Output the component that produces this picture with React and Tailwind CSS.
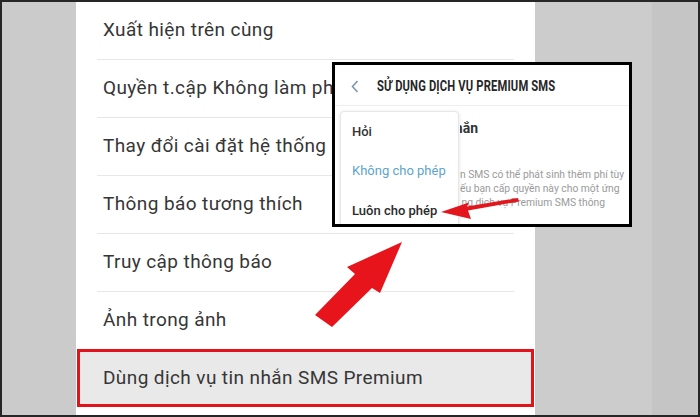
import React from "react";

const items = [
  "Xuất hiện trên cùng",
  "Quyền t.cập Không làm phiền",
  "Thay đổi cài đặt hệ thống",
  "Thông báo tương thích",
  "Truy cập thông báo",
  "Ảnh trong ảnh",
];

const SettingsList = () => (
  <div className="w-[459px] bg-white flex flex-col">
    {items.map((label, i) => (
      <div
        key={label}
        className={`${i === items.length - 1 ? "h-[57px]" : "h-[58px] border-b border-[#e7e7e7]"} mx-[21px] flex items-center pl-[6px] text-[19px] tracking-[0.4px] text-[#363636] whitespace-nowrap`}
      >
        {label}
      </div>
    ))}
    <div className="h-[58px] mx-px border-[3px] border-[#e3121b] bg-[#e9e9e9] flex items-center pl-[23px] text-[19px] tracking-[0.4px] text-[#363636]">
      Dùng dịch vụ tin nhắn SMS Premium
    </div>
  </div>
);

const PremiumInset = () => (
  <div className="absolute left-[330px] top-[60px] w-[300px] h-[165px] border-[3px] border-black bg-white overflow-hidden">
    <div className="h-[41px] flex items-center pt-[3px] pl-[16px] border-b border-[#eeeeee]">
      <svg width="8" height="13" viewBox="0 0 8 13">
        <polyline points="6.5,1 1.5,6.5 6.5,12" fill="none" stroke="#7d98ab" strokeWidth="1.6" />
      </svg>
      <span className="ml-[18px] text-[14px] font-bold text-[#262626] whitespace-nowrap scale-x-[0.8] origin-left inline-block tracking-[0.2px]">
        SỬ DỤNG DỊCH VỤ PREMIUM SMS
      </span>
    </div>

    {/* page text behind the dropdown: only the part right of the menu shows */}
    <div className="flex">
      <div className="w-[125px] shrink-0" />
      <div className="flex-1 overflow-hidden flex flex-col">
        <div className="mt-[12px] pr-[151px] flex justify-end text-[14px] font-bold text-[#333] leading-[20px]">
          <span className="whitespace-nowrap shrink-0">nhắn</span>
        </div>
        <div className="mt-[30px] flex flex-col text-[10.3px] leading-[14px] text-[#9a9a9a] whitespace-nowrap">
          <div className="text-right pr-[11px]">n SMS có thể phát sinh thêm phí tùy</div>
          <div className="text-right pr-[16px]">ếu bạn cấp quyền này cho một ứng</div>
          <div className="text-right pr-[24px]">ng dịch vụ Premium SMS thông</div>
        </div>
      </div>
    </div>

    <div className="absolute left-[5px] top-[46px] w-[119px] h-[140px] bg-white rounded-[4px] border border-[#e6e6e6] shadow-[0_1px_4px_rgba(0,0,0,0.12)] flex flex-col text-[13px]">
      <div className="h-[39px] flex items-center pl-[11px] font-medium text-[#333]">Hỏi</div>
      <div className="h-[40px] flex items-center pl-[11px] text-[#5ea5c9]">Không cho phép</div>
      <div className="h-[39px] flex items-center pl-[11px] font-medium text-[#2b2b2b]">Luôn cho phép</div>
    </div>
  </div>
);

const Arrows = () => (
  <svg
    className="absolute left-0 top-0 pointer-events-none"
    width="696"
    height="413"
    viewBox="2 2 696 413"
  >
    <polygon
      points="402,242 347,267 355,274 315,315 332,327 372,288 380,293"
      fill="#e8141c"
    />
    <polygon
      points="441,212 469,202.5 467,206.5 518,198 519,201.5 468,210.5 471,219"
      fill="#e3161d"
    />
  </svg>
);

export default function App() {
  return (
    <div className="w-[700px] h-[417px] relative overflow-hidden border-2 border-[#262626] bg-[#cbcbcb] flex font-['Roboto',sans-serif]">
      <div className="w-[74px] bg-[#cbcbcb]" />
      <SettingsList />
      <div className="flex-1 flex">
        <div className="flex-1 bg-[#cccccc]" />
        <div className="w-[46px] bg-[#c5c5c5]" />
      </div>
      <PremiumInset />
      <Arrows />
    </div>
  );
}
